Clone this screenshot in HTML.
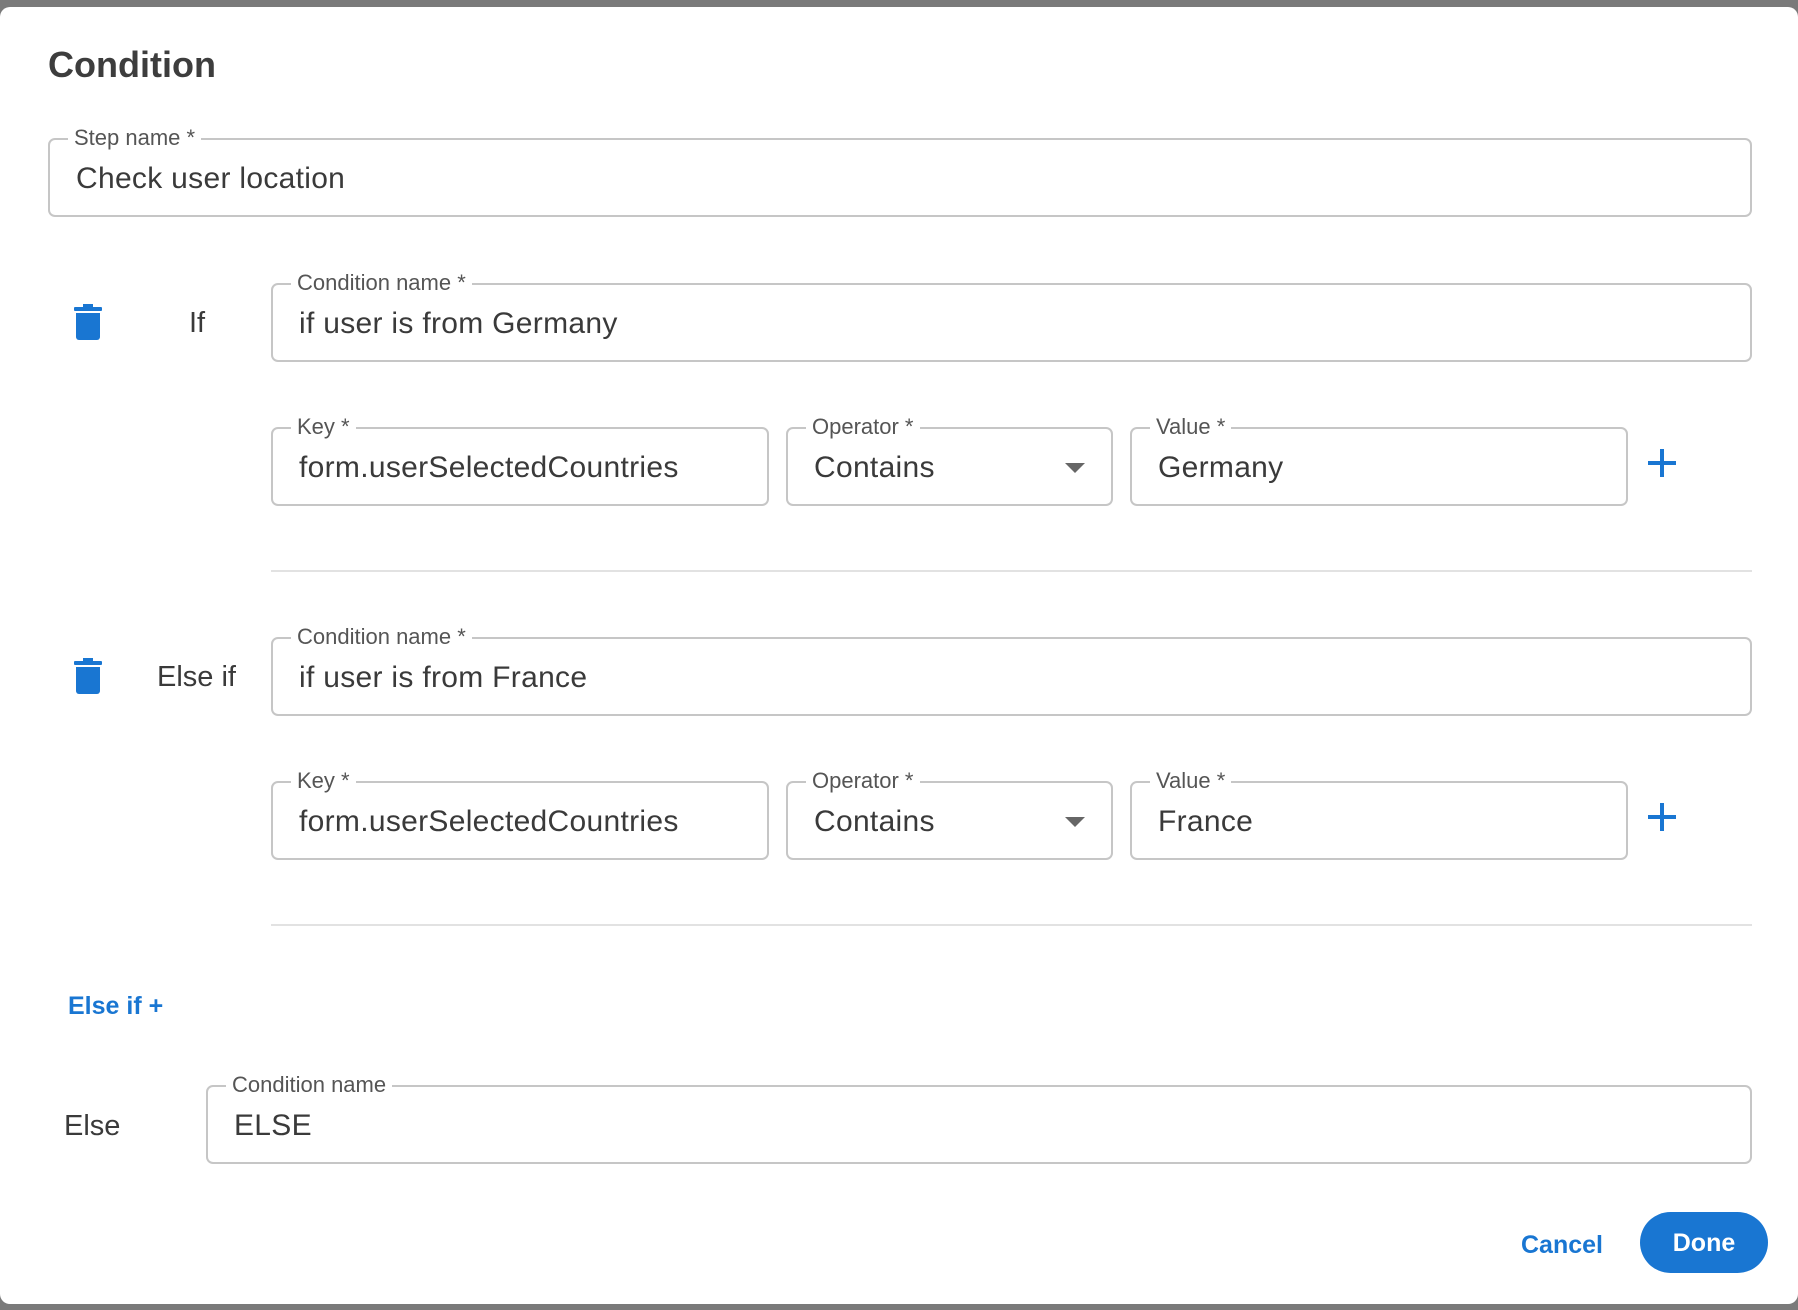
<!DOCTYPE html>
<html><head><meta charset="utf-8"><style>
*{box-sizing:border-box;margin:0;padding:0}
html,body{width:1798px;height:1310px;overflow:hidden;background:#7a7a7a;font-family:"Liberation Sans",sans-serif;color:#3a3a3a}
.dlg{position:absolute;left:0;top:7px;width:1798px;height:1297px;background:#fff;border-radius:10px}
.a{position:absolute}
.box{position:absolute;border:2px solid #c6c6c6;border-radius:7px}
.lbl{position:absolute;top:-16px;left:18px;padding:0 6px;background:#fff;font-size:22px;color:#555;line-height:28px;white-space:nowrap}
.val{position:absolute;left:26px;top:21px;font-size:30px;line-height:36px;color:#3a3a3a;white-space:nowrap;letter-spacing:0.3px}
.hr{position:absolute;left:271px;width:1481px;height:2px;background:#e2e2e2}
.plus{position:absolute;width:28px;height:28px}
.plus:before{content:"";position:absolute;left:12px;top:0;width:4px;height:28px;background:#1976d2}
.plus:after{content:"";position:absolute;top:12px;left:0;height:4px;width:28px;background:#1976d2}
.arrow{position:absolute;right:26px;top:34px;width:0;height:0;border-left:10px solid transparent;border-right:10px solid transparent;border-top:10px solid #666}
.side{position:absolute;font-size:29px;color:#3a3a3a}
</style></head><body>
<div class="dlg">
<div class="a" style="left:48px;top:37px;font-size:36px;font-weight:bold;color:#3d3d3d">Condition</div>

<div class="box" style="left:48px;top:131px;width:1704px;height:79px"><div class="lbl">Step name *</div><div class="val">Check user location</div></div>

<svg class="a" style="left:74px;top:297px" width="28" height="37" viewBox="0 0 28 37"><rect x="0" y="3" width="28" height="4" rx="1" fill="#1976d2"/><rect x="9" y="0" width="10" height="4" fill="#1976d2"/><path d="M2 9h24v24a3 3 0 0 1-3 3H5a3 3 0 0 1-3-3z" fill="#1976d2"/></svg>
<div class="side" style="left:189px;top:300px">If</div>
<div class="box" style="left:271px;top:276px;width:1481px;height:79px"><div class="lbl">Condition name *</div><div class="val">if user is from Germany</div></div>
<div class="box" style="left:271px;top:420px;width:498px;height:79px"><div class="lbl">Key *</div><div class="val">form.userSelectedCountries</div></div>
<div class="box" style="left:786px;top:420px;width:327px;height:79px"><div class="lbl">Operator *</div><div class="val">Contains</div><div class="arrow"></div></div>
<div class="box" style="left:1130px;top:420px;width:498px;height:79px"><div class="lbl">Value *</div><div class="val">Germany</div></div>
<div class="plus" style="left:1648px;top:442px"></div>
<div class="hr" style="top:563px"></div>

<svg class="a" style="left:74px;top:651px" width="28" height="37" viewBox="0 0 28 37"><rect x="0" y="3" width="28" height="4" rx="1" fill="#1976d2"/><rect x="9" y="0" width="10" height="4" fill="#1976d2"/><path d="M2 9h24v24a3 3 0 0 1-3 3H5a3 3 0 0 1-3-3z" fill="#1976d2"/></svg>
<div class="side" style="left:157px;top:654px">Else if</div>
<div class="box" style="left:271px;top:630px;width:1481px;height:79px"><div class="lbl">Condition name *</div><div class="val">if user is from France</div></div>
<div class="box" style="left:271px;top:774px;width:498px;height:79px"><div class="lbl">Key *</div><div class="val">form.userSelectedCountries</div></div>
<div class="box" style="left:786px;top:774px;width:327px;height:79px"><div class="lbl">Operator *</div><div class="val">Contains</div><div class="arrow"></div></div>
<div class="box" style="left:1130px;top:774px;width:498px;height:79px"><div class="lbl">Value *</div><div class="val">France</div></div>
<div class="plus" style="left:1648px;top:796px"></div>
<div class="hr" style="top:917px"></div>

<div class="a" style="left:68px;top:985px;font-size:25px;font-weight:bold;color:#1976d2">Else if +</div>

<div class="side" style="left:64px;top:1103px">Else</div>
<div class="box" style="left:206px;top:1078px;width:1546px;height:79px"><div class="lbl">Condition name</div><div class="val">ELSE</div></div>

<div class="a" style="left:1521px;top:1224px;font-size:25px;font-weight:bold;color:#1976d2">Cancel</div>
<div class="a" style="left:1640px;top:1205px;width:128px;height:61px;border-radius:31px;background:#1976d2;color:#fff;font-size:25px;font-weight:bold;text-align:center;line-height:63px">Done</div>
</div>
</body></html>
